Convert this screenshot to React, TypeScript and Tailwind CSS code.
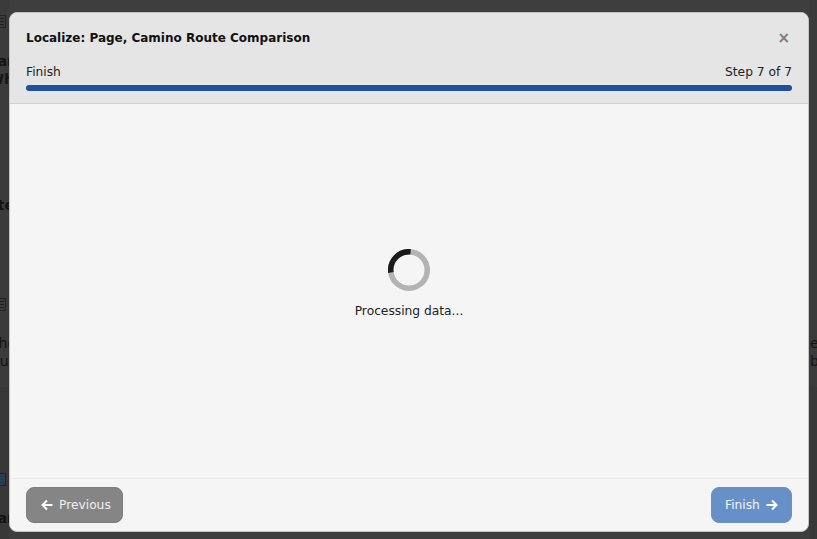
import React from "react";

function Mini({ tint }: { tint?: boolean }) {
  return (
    <svg width="13" height="13" viewBox="0 0 13 13">
      <rect x="0.5" y="0.5" width="12" height="12" fill={tint ? "#36404e" : "none"} stroke="#242424" />
      <path d="M2 3.5h9M2 6.5h9M2 9.5h9" stroke={tint ? "#263a55" : "#1f1f1f"} />
    </svg>
  );
}

export default function App() {
  return (
    <div className="relative h-[539px] w-[817px] overflow-hidden bg-[#3e3e3e] font-['DejaVu_Sans',sans-serif] text-[14px] text-[#141414]">
      {/* Page behind the dialog */}
      <div className="absolute inset-0 flex justify-between">
        <div className="relative w-[9px] overflow-hidden bg-[#3b3b3b]">
          <div className="absolute right-[3px] top-[15px]"><Mini /></div>
          <div className="absolute right-[-5px] top-[52px] whitespace-nowrap text-right font-bold leading-[18px]">ar<br />Wh</div>
          <div className="absolute right-[-5px] top-[196px] whitespace-nowrap font-bold leading-[18px]">te</div>
          <div className="absolute right-[3px] top-[298px]"><Mini /></div>
          <div className="absolute right-[-7px] top-[334px] whitespace-nowrap text-right leading-[18px]">ho<br />us</div>
          <div className="absolute right-[3px] top-[473px]"><Mini tint /></div>
          <div className="absolute right-[-5px] top-[509px] whitespace-nowrap font-bold leading-[18px]">ar</div>
          <div className="absolute inset-x-0 bottom-0 top-[387px] bg-black/5" />
        </div>
        <div className="relative w-[8px] overflow-hidden bg-[#3b3b3b]">
          <div className="absolute left-[1px] top-[334px] whitespace-nowrap leading-[18px]">e<br />b</div>
          <div className="absolute inset-x-0 bottom-0 top-[387px] bg-black/5" />
        </div>
      </div>

      {/* Dialog */}
      <div className="absolute left-[9px] top-[12px] flex h-[520px] w-[800px] flex-col overflow-hidden rounded-[8px] border border-[#c4c4c4] bg-[#f5f5f5]">
        <div className="flex h-[91px] shrink-0 flex-col border-b border-[#d0d0d0] bg-[#e5e5e5] px-4">
          <div className="flex h-[49px] items-center justify-between pt-[1px]">
            <h2 className="text-[12px] font-bold text-[#111111]">Localize: Page, Camino Route Comparison</h2>
            <span className="mr-[2px] text-[15px] font-bold leading-none text-[#7a7a7a]">×</span>
          </div>
          <div className="flex items-center justify-between pt-[1px] text-[12.25px] leading-[18px] text-[#222222]">
            <span>Finish</span>
            <span>Step 7 of 7</span>
          </div>
          <div className="mt-[4px] h-[6px] rounded-full bg-[#1f5099]" />
        </div>

        <div className="flex flex-1 flex-col items-center justify-center pb-[14px]">
          <svg viewBox="0 0 42 42" width="42" height="42">
            <circle cx="21" cy="21" r="18.25" fill="none" stroke="#b3b3b3" strokeWidth="5.5" />
            <path d="M2.9 23.5A18.25 18.25 0 0 1 22.6 2.8" fill="none" stroke="#1a1a1a" strokeWidth="5.5" />
          </svg>
          <p className="mt-[11px] text-[12.25px] leading-[18px] text-[#222222]">Processing data...</p>
        </div>

        <div className="flex h-[53px] shrink-0 items-start justify-between border-t border-[#e8e8e8] px-4 pt-[8px]">
          <button className="flex h-[36px] w-[97px] items-center gap-[6px] rounded-[8px] border border-[#7d7d7d] bg-[#858585] pl-[14px] text-[12.25px] text-[#f0f0f0]">
            <svg width="12" height="12" viewBox="0 0 12 12" fill="none" stroke="white" strokeWidth="2"><path d="M11.5 6H1.5M6 1.5 1.5 6 6 10.5" /></svg>
            Previous
          </button>
          <button className="flex h-[36px] w-[81px] items-center gap-[6px] rounded-[8px] border border-[#6a92c8] bg-[#6790c8] pl-[13px] text-[12.25px] text-[#f0f4fa]">
            Finish
            <svg width="12" height="12" viewBox="0 0 12 12" fill="none" stroke="white" strokeWidth="2"><path d="M0.5 6H10.5M6 1.5 10.5 6 6 10.5" /></svg>
          </button>
        </div>
      </div>
    </div>
  );
}
